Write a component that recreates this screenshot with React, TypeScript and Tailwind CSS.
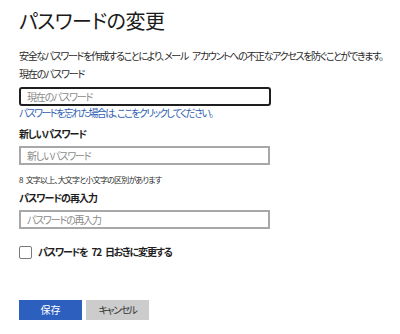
import React from "react";

function Sp({ w }: { w: string }) {
  return <span className={`inline-block ${w}`} />;
}

export default function App() {
  const font = "font-['Noto_Sans_CJK_JP','Noto_Sans',sans-serif] [font-feature-settings:'palt']";
  return (
    <div className={`w-[400px] h-[334px] bg-white pl-[19px] pt-[7px] flex flex-col items-start text-[#222] ${font}`}>
      <h1 className="text-[20px] leading-[28px] font-normal text-[#1a1a1a] tracking-[-0.5px] whitespace-nowrap">パスワードの変更</h1>
      <p className="mt-[14px] text-[10px] leading-[14px] text-[#2a2a2a] tracking-[-1.35px] whitespace-nowrap">
        安全なパスワードを作成することにより、メール<Sp w="w-[4px]" />アカウントへの不正なアクセスを防ぐことができます。
      </p>
      <label className="mt-[4px] text-[10px] leading-[14px] text-[#2a2a2a] tracking-[-1.2px]">現在のパスワード</label>
      <input
        type="password"
        placeholder="現在のパスワード"
        className="mt-[6px] w-[252px] h-[19px] border-2 border-[#1e1e1e] rounded-[3px] px-[6px] text-[10px] tracking-[-1.2px] placeholder:text-[#8a8a8a] outline-none"
      />
      <a className="text-[10px] leading-[14px] text-[#2f5fb3] tracking-[-1.6px] whitespace-nowrap">パスワードを忘れた場合は、ここをクリックしてください。</a>
      <label className="mt-[7px] text-[10px] leading-[14px] font-bold text-[#1e1e1e] tracking-[-1.1px]">新しいパスワード</label>
      <input
        type="password"
        placeholder="新しいパスワード"
        className="mt-[5px] w-[251px] h-[19px] border-2 border-[#a8a8a8] px-[6px] text-[10px] tracking-[-1.2px] placeholder:text-[#8a8a8a] outline-none"
      />
      <p className="mt-[9px] text-[8px] leading-[12px] text-[#2a2a2a] tracking-[-0.8px] whitespace-nowrap">8<Sp w="w-[3px]" />文字以上、大文字と小文字の区別があります</p>
      <label className="mt-[5px] text-[10px] leading-[14px] font-bold text-[#1e1e1e] tracking-[-1px]">パスワードの再入力</label>
      <input
        type="password"
        placeholder="パスワードの再入力"
        className="mt-[5px] w-[251px] h-[19px] border-2 border-[#a8a8a8] px-[6px] text-[10px] tracking-[-1.2px] placeholder:text-[#8a8a8a] outline-none"
      />
      <div className="mt-[16px] flex items-center h-[14px]">
        <span className="w-[13px] h-[13px] border border-[#7a7a7a] rounded-[2px] bg-white" />
        <span className="ml-[6px] text-[10px] leading-[14px] font-bold text-[#1e1e1e] tracking-[-1.2px] whitespace-nowrap">
          パスワードを<Sp w="w-[4px]" />72<Sp w="w-[4px]" />日おきに変更する
        </span>
      </div>
      <div className="mt-[41px] flex gap-[4px]">
        <button className="w-[63px] h-[20px] bg-[#2d5fbf] text-white text-[10px] leading-[20px]">保存</button>
        <button className="w-[63px] h-[20px] bg-[#cccccc] text-[#333] text-[10px] leading-[20px] tracking-[-1.5px]">キャンセル</button>
      </div>
    </div>
  );
}
